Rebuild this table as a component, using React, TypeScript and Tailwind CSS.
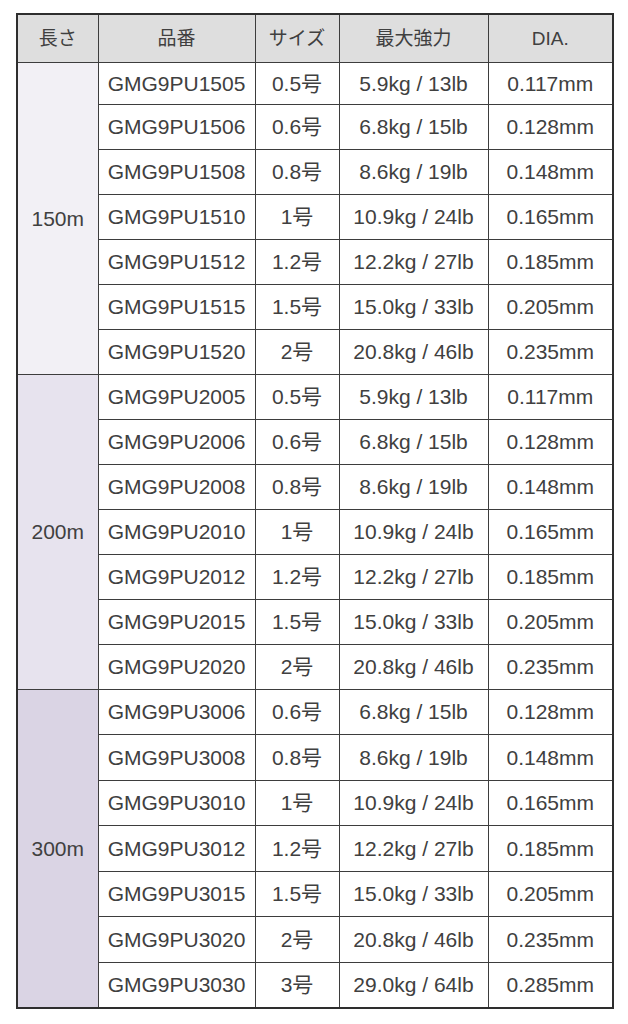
const groups = [
  {
    length: '150m',
    bg: 'bg-[#f2f0f5]',
    rows: [
      ['GMG9PU1505', '0.5号', '5.9kg / 13lb', '0.117mm'],
      ['GMG9PU1506', '0.6号', '6.8kg / 15lb', '0.128mm'],
      ['GMG9PU1508', '0.8号', '8.6kg / 19lb', '0.148mm'],
      ['GMG9PU1510', '1号', '10.9kg / 24lb', '0.165mm'],
      ['GMG9PU1512', '1.2号', '12.2kg / 27lb', '0.185mm'],
      ['GMG9PU1515', '1.5号', '15.0kg / 33lb', '0.205mm'],
      ['GMG9PU1520', '2号', '20.8kg / 46lb', '0.235mm'],
    ],
  },
  {
    length: '200m',
    bg: 'bg-[#e7e3ee]',
    rows: [
      ['GMG9PU2005', '0.5号', '5.9kg / 13lb', '0.117mm'],
      ['GMG9PU2006', '0.6号', '6.8kg / 15lb', '0.128mm'],
      ['GMG9PU2008', '0.8号', '8.6kg / 19lb', '0.148mm'],
      ['GMG9PU2010', '1号', '10.9kg / 24lb', '0.165mm'],
      ['GMG9PU2012', '1.2号', '12.2kg / 27lb', '0.185mm'],
      ['GMG9PU2015', '1.5号', '15.0kg / 33lb', '0.205mm'],
      ['GMG9PU2020', '2号', '20.8kg / 46lb', '0.235mm'],
    ],
  },
  {
    length: '300m',
    bg: 'bg-[#dad4e4]',
    rows: [
      ['GMG9PU3006', '0.6号', '6.8kg / 15lb', '0.128mm'],
      ['GMG9PU3008', '0.8号', '8.6kg / 19lb', '0.148mm'],
      ['GMG9PU3010', '1号', '10.9kg / 24lb', '0.165mm'],
      ['GMG9PU3012', '1.2号', '12.2kg / 27lb', '0.185mm'],
      ['GMG9PU3015', '1.5号', '15.0kg / 33lb', '0.205mm'],
      ['GMG9PU3020', '2号', '20.8kg / 46lb', '0.235mm'],
      ['GMG9PU3030', '3号', '29.0kg / 64lb', '0.285mm'],
    ],
  },
];

const cell = 'border border-[#3d3d3d] text-center p-0';

const App = () => {
  return (
    <div
      className="w-[628px] h-[1024px] bg-white pt-[13px] pl-[16px] text-[#404040]"
      style={{ fontFamily: '"Liberation Sans", "Noto Sans CJK JP", sans-serif' }}
    >
      <table className="w-[596px] table-fixed border-collapse border-2 border-[#2e2e2e] text-[21px] leading-none">
        <colgroup>
          <col className="w-[81px]" />
          <col className="w-[157px]" />
          <col className="w-[84px]" />
          <col className="w-[149px]" />
          <col className="w-[125px]" />
        </colgroup>
        <thead>
          <tr className="h-[48px] bg-[#dedede] text-[19px]">
            <th className={`${cell} font-normal`}>長さ</th>
            <th className={`${cell} font-normal`}>品番</th>
            <th className={`${cell} font-normal`}>サイズ</th>
            <th className={`${cell} font-normal`}>最大強力</th>
            <th className={`${cell} font-normal`}>DIA.</th>
          </tr>
        </thead>
        <tbody>
          {groups.map((g, gi) =>
            g.rows.map((r, i) => (
              <tr
                key={`${gi}-${i}`}
                className={gi === 0 && i === 0 ? 'h-[42px]' : gi === 2 ? 'h-[45.5px]' : 'h-[45px]'}
              >
                {i === 0 && (
                  <td rowSpan={g.rows.length} className={`${cell} ${g.bg} text-[21px]`}>
                    {g.length}
                  </td>
                )}
                <td className={cell}>{r[0]}</td>
                <td className={cell}>{r[1]}</td>
                <td className={cell}>{r[2]}</td>
                <td className={cell}>{r[3]}</td>
              </tr>
            ))
          )}
        </tbody>
      </table>
    </div>
  );
};

export default App;
